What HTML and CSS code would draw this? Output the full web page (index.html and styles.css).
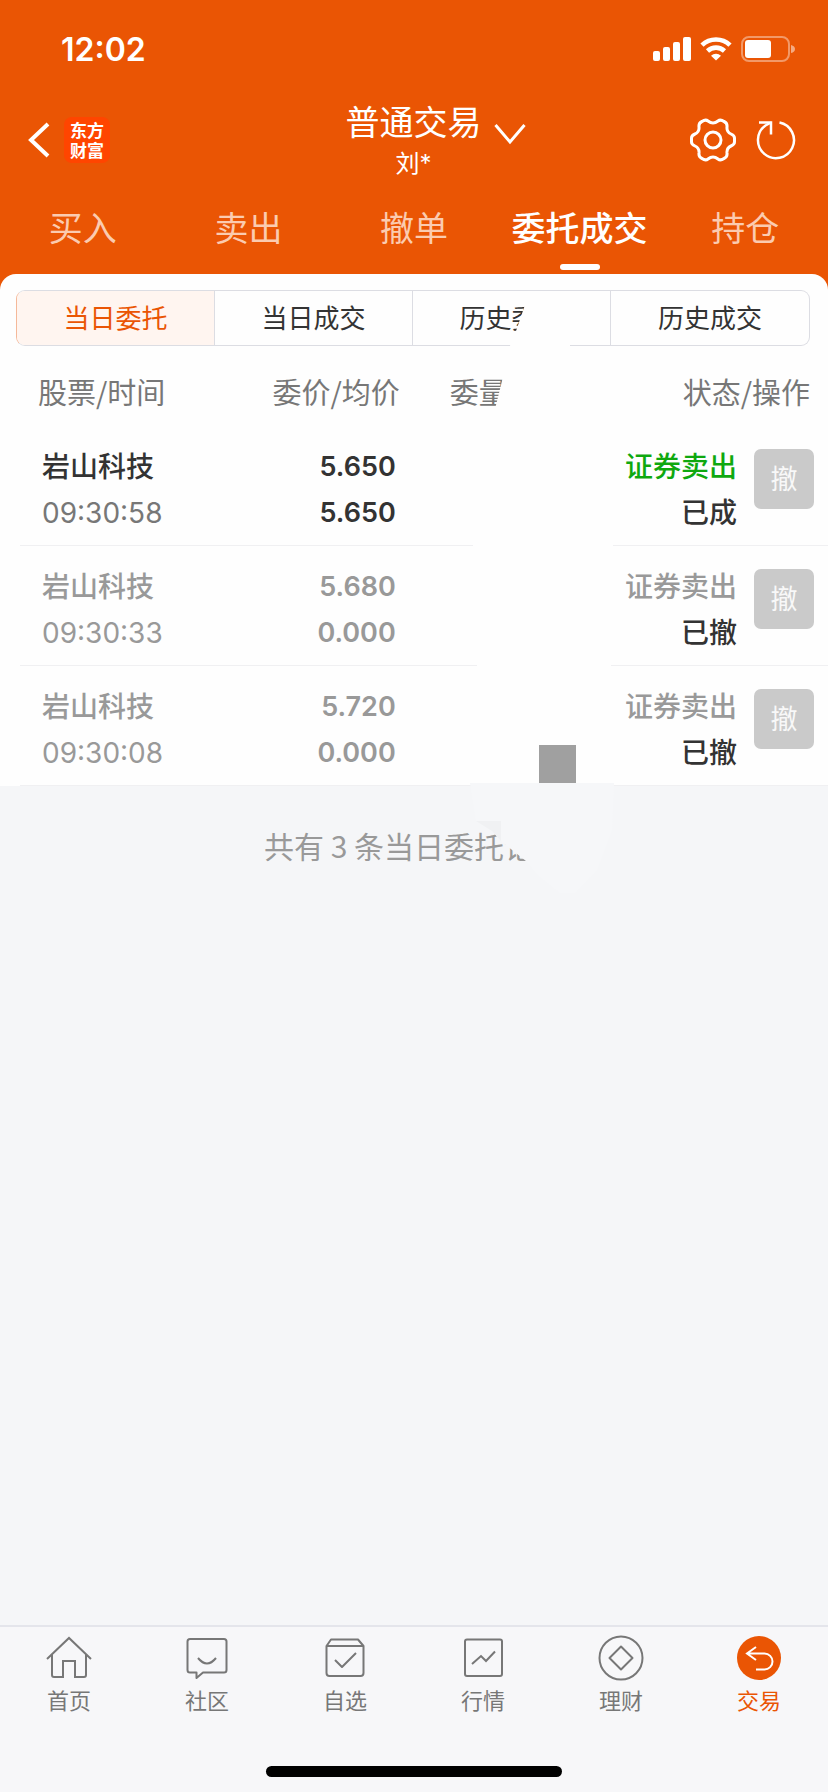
FILE: index.html
```html
<!DOCTYPE html>
<html lang="zh-CN">
<head>
    <meta charset="UTF-8">
    <meta name="viewport" content="width=device-width, initial-scale=1">
    <title>委托成交</title>
    <link rel="stylesheet" href="styles.css">
</head>
<body>
    <header class="header">
        <div class="status-bar">
            <span class="time">12:02</span>
            <div class="status-icons">
                <svg width="38" height="24" viewBox="0 0 38 24" fill="#fff">
                    <rect x="0" y="14" width="7" height="10" rx="2"/>
                    <rect x="10" y="10" width="7" height="14" rx="2"/>
                    <rect x="20" y="5" width="7" height="19" rx="2"/>
                    <rect x="30" y="0" width="8" height="24" rx="2"/>
                </svg>
                <svg width="32" height="24" viewBox="0 0 32 24" fill="none" stroke="#fff" stroke-width="4.6">
                    <path d="M2 8.2a20 20 0 0 1 28 0"/>
                    <path d="M7.5 14a12.5 12.5 0 0 1 17 0"/>
                    <path d="M16 23.500l-5-4.800a7.500 7.500 0 0 1 10 0z" fill="#fff" stroke="none"/>
                </svg>
                <svg width="54" height="26" viewBox="0 0 54 26">
                    <rect x="1" y="1" width="47" height="24" rx="7" fill="none" stroke="#fff" stroke-opacity=".4" stroke-width="2"/>
                    <rect x="4" y="4" width="26" height="18" rx="3" fill="#fff"/>
                    <path d="M50 9q4 1 4 4t-4 4z" fill="#fff" fill-opacity=".5"/>
                </svg>
            </div>
        </div>

        <div class="nav">
            <div class="nav-left">
                <button class="icon-btn" aria-label="返回">
                    <svg width="22" height="36" viewBox="0 0 22 36" fill="none" stroke="#fff" stroke-width="4">
                        <path d="M20 2L3 18l17 16"/>
                    </svg>
                </button>
                <a href="#" class="logo">东方<br>财富</a>
            </div>
            <button class="account">
                <span class="account-text">
                    <span class="account-type">普通交易</span>
                    <span class="account-name">刘*</span>
                </span>
                <svg class="account-arrow" width="32" height="22" viewBox="0 0 32 22" fill="none" stroke="#fff" stroke-width="3">
                    <path d="M1.500 1L16 18 30.500 1"/>
                </svg>
            </button>
            <div class="nav-right">
                <button class="icon-btn" aria-label="设置">
                    <svg width="46" height="44" viewBox="0 0 46 44" fill="none" stroke="#fff" stroke-width="3" stroke-linejoin="round">
                        <path d="M12 3.500Q15.500 1 18 3Q23 7 28 3Q30.500 1 34 3.500Q37.500 5 37 9Q36.500 14 41 16Q44.500 17.500 44.500 20V24Q44.500 26.500 41 28Q36.500 30 37 35Q37.500 39 34 40.500Q30.500 43 28 41Q23 37 18 41Q15.500 43 12 40.500Q8.500 39 9 35Q9.500 30 5 28Q1.500 26.500 1.500 24V20Q1.500 17.500 5 16Q9.500 14 9 9Q8.500 5 12 3.500Z"/>
                        <circle cx="23" cy="22" r="8"/>
                    </svg>
                </button>
                <button class="icon-btn" aria-label="刷新">
                    <svg width="40" height="40" viewBox="0 0 40 40" fill="none" stroke="#fff" stroke-width="2.500">
                        <path d="M23.500 2.500A18 18 0 1 1 9.500 5.500L15 2.500"/>
                        <path d="M3 2.500H15V14.500"/>
                    </svg>
                </button>
            </div>
        </div>

        <nav class="tabs">
            <a href="#" class="tab">买入</a>
            <a href="#" class="tab">卖出</a>
            <a href="#" class="tab">撤单</a>
            <a href="#" class="tab active">委托成交</a>
            <a href="#" class="tab">持仓</a>
        </nav>
    </header>

    <main class="main">
        <div class="panel-wrap">
            <div class="panel">
                <div class="segments">
                    <button class="segment active">当日委托</button>
                    <button class="segment">当日成交</button>
                    <button class="segment">历史委托</button>
                    <button class="segment">历史成交</button>
                </div>

                <table class="orders">
                    <colgroup>
                        <col class="col-stock">
                        <col class="col-price">
                        <col>
                        <col class="col-state">
                        <col class="col-action">
                    </colgroup>
                    <thead>
                        <tr>
                            <th class="stock">股票/时间</th>
                            <th class="price">委价/均价</th>
                            <th class="amount">委量</th>
                            <th class="state" colspan="2">状态/操作</th>
                        </tr>
                    </thead>
                    <tbody>
                        <tr>
                            <td class="stock"><div class="name">岩山科技</div><div class="clock">09:30:58</div></td>
                            <td class="price"><div>5.650</div><div>5.650</div></td>
                            <td></td>
                            <td class="state"><div class="side sell">证券卖出</div><div>已成</div></td>
                            <td class="action"><button class="cancel" disabled>撤</button></td>
                        </tr>
                        <tr class="cancelled">
                            <td class="stock"><div class="name">岩山科技</div><div class="clock">09:30:33</div></td>
                            <td class="price"><div>5.680</div><div>0.000</div></td>
                            <td></td>
                            <td class="state"><div class="side">证券卖出</div><div>已撤</div></td>
                            <td class="action"><button class="cancel" disabled>撤</button></td>
                        </tr>
                        <tr class="cancelled">
                            <td class="stock"><div class="name">岩山科技</div><div class="clock">09:30:08</div></td>
                            <td class="price"><div>5.720</div><div>0.000</div></td>
                            <td></td>
                            <td class="state"><div class="side">证券卖出</div><div>已撤</div></td>
                            <td class="action"><button class="cancel" disabled>撤</button></td>
                        </tr>
                    </tbody>
                </table>
            </div>
        </div>
        <p class="summary">共有 3 条当日委托记录</p>

        <!-- hides the quantity column -->
        <svg class="cover" width="150" height="600" viewBox="0 0 150 600" aria-hidden="true">
            <path fill="#fefefe" d="M63 25L51 60 45 74 41 95 36 115 31 135 20 160 14 185 10 225 9 272 13 392 6 511H150L147 392 149 272 148 240 142 186 133 156 118 128 112 100 106 72 105 25Z"/>
            <path fill="#f6f7f9" d="M6 509H150L148 556 133 596 111 619 96 619 75 602 62 587 38 568 28 557 12 547Z"/>
            <path fill="#f0f1f3" d="M12 547H37V567L28 557Z"/>
            <rect x="75" y="471" width="37" height="38" fill="#a0a0a0"/>
        </svg>
    </main>

    <footer class="footer">
        <nav class="tabbar">
            <a href="#" class="tabbar-item">
                <svg width="46" height="46" viewBox="0 0 46 46" fill="none" stroke="#777" stroke-width="2">
                    <path d="M1 24L23 3l22 21"/>
                    <path d="M6 19V40q0 2 2 2H17V26H29V42H38q2 0 2-2V19"/>
                </svg>
                <span>首页</span>
            </a>
            <a href="#" class="tabbar-item">
                <svg width="46" height="46" viewBox="0 0 46 46" fill="none" stroke="#777" stroke-width="2" stroke-linejoin="round">
                    <path d="M6 4H40q2.500 0 2.500 2.500V35q0 2.500-2.500 2.500H19L12.500 43V37.500H6q-2.500 0-2.500-2.500V6.500Q3.500 4 6 4Z"/>
                    <path d="M14 23q9 11 18 0"/>
                </svg>
                <span>社区</span>
            </a>
            <a href="#" class="tabbar-item">
                <svg width="46" height="46" viewBox="0 0 46 46" fill="none" stroke="#777" stroke-width="2" stroke-linejoin="round">
                    <path d="M4.500 11L9 4.500H36L41.500 11V38q0 3-3 3h-31q-3 0-3-3ZM4.500 11H41.500"/>
                    <path d="M13 25l7 7 14-14"/>
                </svg>
                <span>自选</span>
            </a>
            <a href="#" class="tabbar-item">
                <svg width="46" height="46" viewBox="0 0 46 46" fill="none" stroke="#777" stroke-width="2">
                    <rect x="5" y="4.500" width="37" height="36.500" rx="2"/>
                    <path d="M12 29l9-8 5 5 9-9.500"/>
                </svg>
                <span>行情</span>
            </a>
            <a href="#" class="tabbar-item">
                <svg width="46" height="46" viewBox="0 0 46 46" fill="none" stroke="#777" stroke-width="2" stroke-linejoin="round">
                    <circle cx="23" cy="23" r="21.500"/>
                    <path d="M23 11.500L34.500 23 23 34.500 11.500 23Z"/>
                </svg>
                <span>理财</span>
            </a>
            <a href="#" class="tabbar-item active">
                <svg width="46" height="46" viewBox="0 0 46 46" fill="none" stroke="#fff" stroke-width="2">
                    <circle cx="23" cy="23" r="22" fill="#ea5504" stroke="none"/>
                    <path d="M20 12L11 18.500 20 25M11 18.500H28.500a7.500 7.500 0 0 1 0 16H20"/>
                </svg>
                <span>交易</span>
            </a>
        </nav>
        <div class="home-indicator"></div>
    </footer>
</body>
</html>
```
FILE: styles.css
```css
* {
    box-sizing: border-box;
}
body {
    margin: 0;
    min-height: 100vh;
    display: flex;
    flex-direction: column;
    background-color: #f5f6f8;
    font-family: Inter, "Noto Sans CJK SC", sans-serif;
    color: #333;
}
a {
    color: inherit;
    text-decoration: none;
}
button {
    padding: 0;
    border: none;
    background: none;
    font: inherit;
    color: inherit;
}
svg {
    display: block;
}

/* header */
.header {
    background-color: #ea5504;
    color: #fff;
}
.status-bar {
    height: 98px;
    padding: 0 33px 0 61px;
    display: flex;
    align-items: center;
    justify-content: space-between;
}
.time {
    font-size: 32px;
    font-weight: 600;
}
.status-icons {
    display: flex;
    align-items: center;
    gap: 9px;
}
.nav {
    height: 84px;
    padding: 0 32px 0 28px;
    display: grid;
    grid-template-columns: 1fr auto 1fr;
    align-items: center;
}
.nav-left {
    display: flex;
    align-items: center;
    gap: 14px;
}
.nav-right {
    display: flex;
    align-items: center;
    justify-content: flex-end;
    gap: 20px;
}
.logo {
    width: 46px;
    height: 46px;
    padding: 3px 0;
    border-radius: 8px;
    background-color: #ff4500;
    text-align: center;
    font-family: "Noto Sans CJK SC", sans-serif;
    font-size: 17px;
    font-weight: 700;
    line-height: 20px;
}
.account {
    display: flex;
    align-items: center;
    gap: 12px;
    padding: 2px 0 0 47px;
}
.account-text {
    display: flex;
    flex-direction: column;
    align-items: center;
}
.account-type {
    font-size: 34px;
    line-height: 46px;
}
.account-name {
    font-size: 24px;
    line-height: 36px;
}
.account-arrow {
    margin-bottom: 12px;
}
.tabs {
    display: grid;
    grid-template-columns: repeat(5, 1fr);
}
.tab {
    height: 92px;
    padding-top: 24px;
    display: flex;
    flex-direction: column;
    align-items: center;
    gap: 12px;
    font-size: 34px;
    line-height: 46px;
    color: #fbcbb0;
}
.tab.active {
    font-weight: 500;
    color: #fff;
}
.tab.active::after {
    content: "";
    width: 40px;
    height: 6px;
    border-radius: 3px;
    background-color: #fff;
}

/* order list */
.main {
    flex: 1;
    position: relative;
}
.panel-wrap {
    background: linear-gradient(#ea5504 20px, #fefefe 20px);
}
.panel {
    padding-top: 16px;
    border-radius: 16px 16px 0 0;
    background-color: #fefefe;
}
.segments {
    height: 56px;
    margin: 0 18px 0 16px;
    display: grid;
    grid-template-columns: repeat(4, 1fr);
    border: 1px solid #dcdde3;
    border-left-color: #f5b99a;
    border-radius: 9px;
    overflow: hidden;
}
.segment {
    padding-bottom: 4px;
    font-size: 26px;
    border-right: 1px solid #dcdde3;
}
.segment:last-child {
    border-right: none;
}
.segment.active {
    background-color: #fff5f0;
    color: #ea5504;
}
.orders {
    width: calc(100% - 20px);
    margin-left: 20px;
    table-layout: fixed;
    border-collapse: separate;
    border-spacing: 0;
    font-size: 28px;
    line-height: 46px;
}
.col-stock {
    width: 27%;
}
.col-price {
    width: 20%;
}
.col-state {
    width: 156px;
}
.col-action {
    width: 91px;
}
.orders th {
    height: 80px;
    padding: 10px 0 0;
    font-family: "Noto Sans CJK SC", sans-serif;
    font-size: 29px;
    font-weight: 400;
    color: #777;
}
.orders td {
    height: 120px;
    padding: 18px 0 9px;
    vertical-align: top;
    border-bottom: 1px solid #f0f0f2;
}
.orders th.stock {
    padding-left: 18px;
    text-align: left;
}
.orders td.stock {
    padding-left: 22px;
}
.orders th.price,
.orders td.price {
    text-align: right;
}
.orders td.price {
    padding-right: 4px;
    font-size: 27px;
    font-weight: 600;
}
.orders th.amount {
    padding-left: 50px;
    text-align: left;
}
.orders th.state {
    padding-right: 18px;
    text-align: right;
}
.orders td.state {
    text-align: right;
    font-weight: 500;
}
.name {
    font-weight: 500;
}
.clock {
    color: #777;
}
.sell {
    color: #0fa80f;
}
.cancelled .name,
.cancelled .clock,
.cancelled .price,
.cancelled .side {
    color: #999;
}
.orders td.action {
    padding: 23px 0 0 17px;
}
.cancel {
    display: block;
    width: 60px;
    height: 60px;
    padding-top: 2px;
    border-radius: 7px;
    background-color: #cacaca;
    color: #f8f8f8;
    font-size: 27px;
}
.summary {
    margin: 0;
    padding: 36px 0;
    text-align: center;
    font-family: "Noto Sans CJK SC", sans-serif;
    font-size: 30px;
    line-height: 46px;
    color: #999;
}
.cover {
    position: absolute;
    top: 0;
    left: 464px;
    overflow: visible;
}

/* bottom bar */
.footer {
    border-top: 2px solid #e4e5eb;
    background-color: #f7f7f9;
}
.tabbar {
    display: grid;
    grid-template-columns: repeat(6, 1fr);
    padding-top: 8px;
}
.tabbar-item {
    display: flex;
    flex-direction: column;
    align-items: center;
    gap: 4px;
    font-size: 22px;
    line-height: 32px;
    color: #777;
}
.tabbar-item.active {
    color: #ea5504;
}
.home-indicator {
    width: 296px;
    height: 11px;
    margin: 49px auto 15px;
    border-radius: 6px;
    background-color: #000;
}
```
